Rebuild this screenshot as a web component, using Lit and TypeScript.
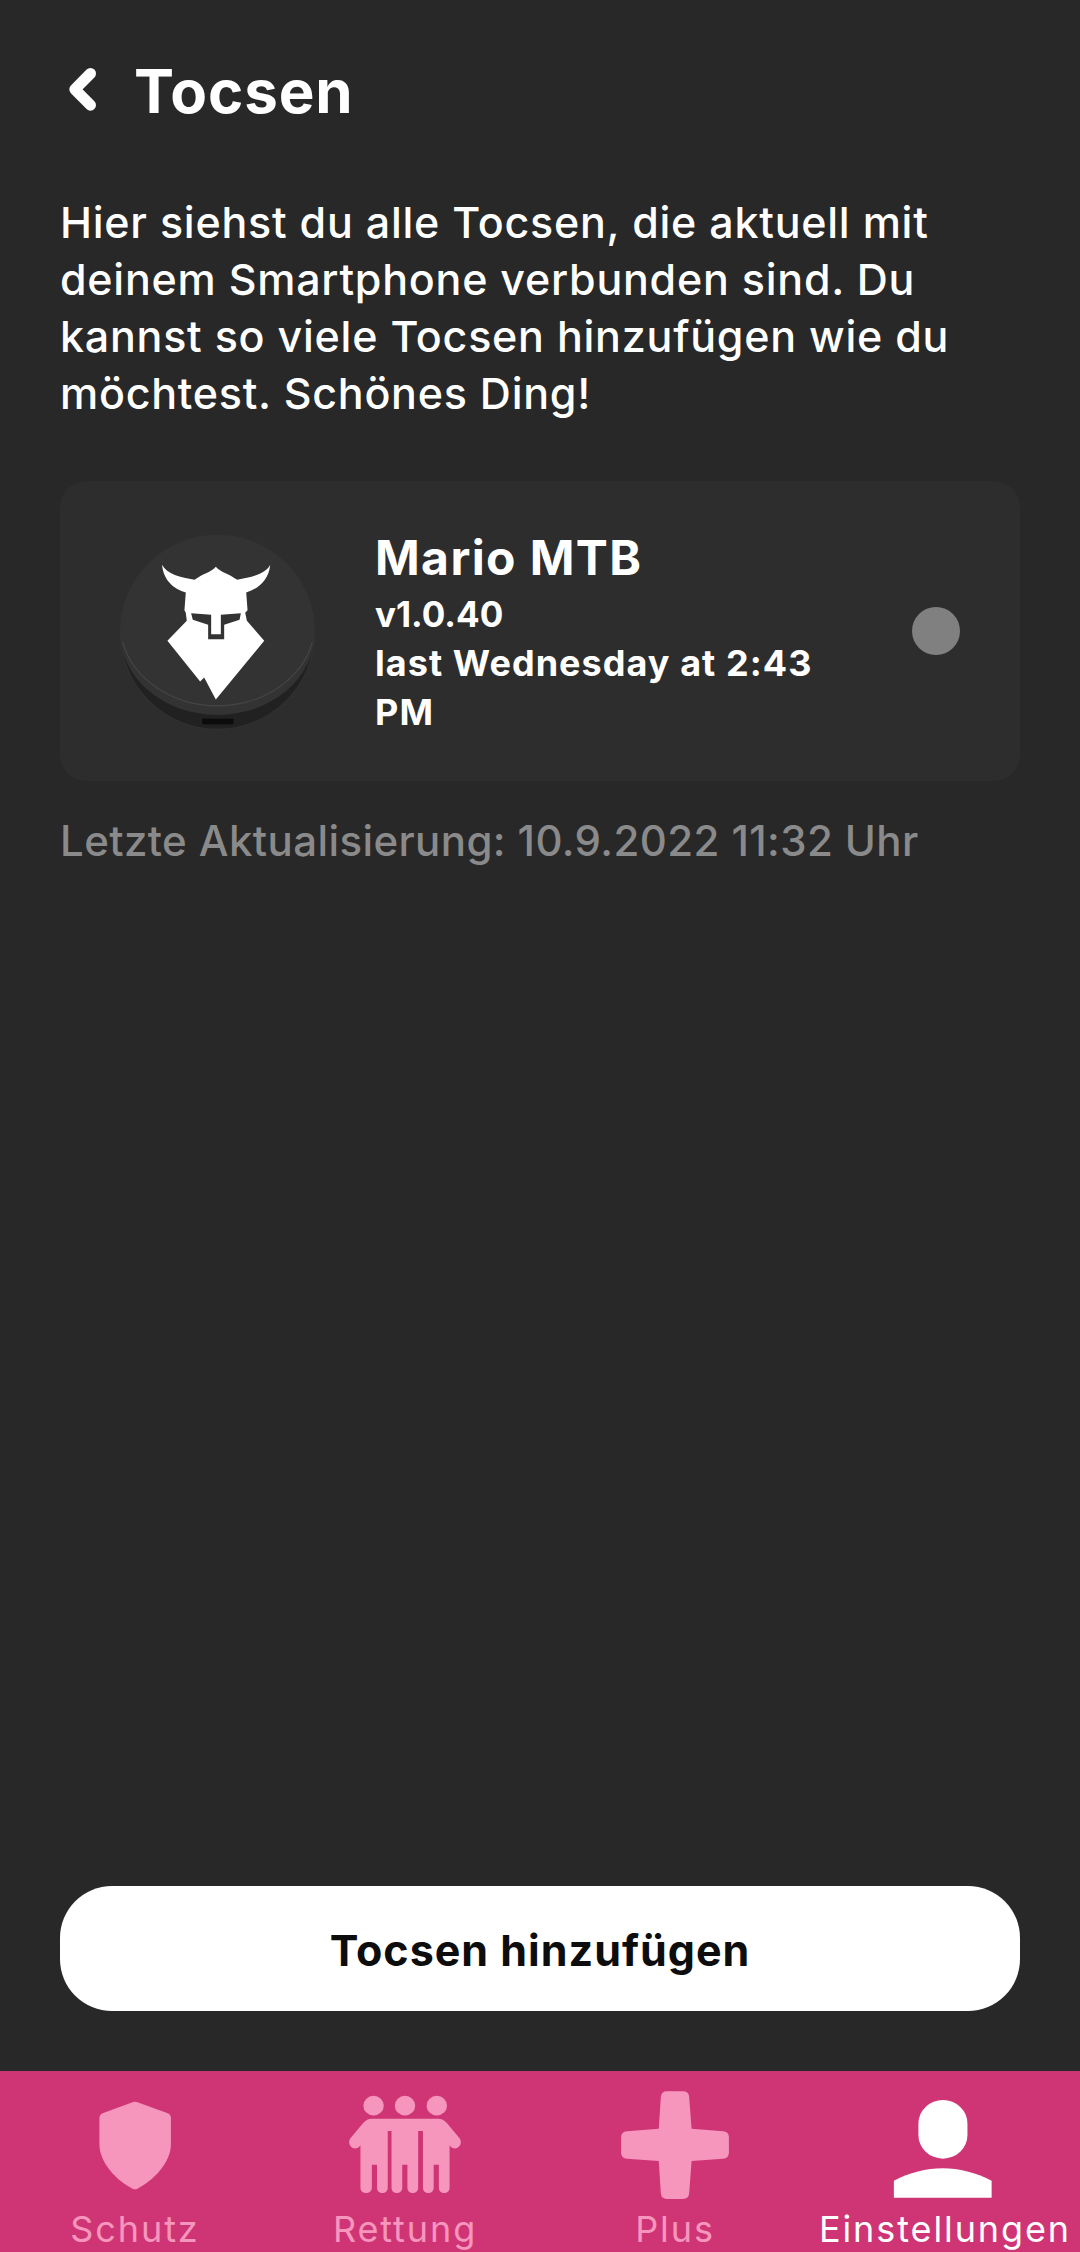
import { LitElement, html, css, svg } from 'lit';
import { customElement } from 'lit/decorators.js';

const tabs = [
  {
    label: 'Schutz',
    view: '228 120 330 330',
    icon: svg`<path d="M386 157 Q393 153 400 157 L486 189 Q497 193 497 204 L497 282 C497 340 445 392 400 416 Q393 420 386 416 C341 392 290 340 290 282 L290 204 Q290 193 301 189 Z"/>`
  },
  {
    label: 'Rettung',
    view: '1012 120 330 330',
    icon: svg`<circle cx="1086" cy="167" r="29.5"/><circle cx="1177" cy="167" r="29.5"/><circle cx="1269" cy="167" r="29.5"/>
      <path d="M1082 206 L1272 206 Q1288 206 1298 219 L1335 265 C1346 280 1330 303 1313 293 Q1306 289 1306 285 L1306 413 C1306 434 1275 434 1275 413 L1275 344 L1260 344 L1260 413 C1260 434 1229 434 1229 413 L1229 243 L1215 243 L1215 413 C1215 434 1184 434 1184 413 L1184 344 L1169 344 L1169 413 C1169 434 1138 434 1138 413 L1138 243 L1127 243 L1127 413 C1127 434 1096 434 1096 413 L1096 344 L1081 344 L1081 413 C1081 434 1048 434 1048 413 L1048 285 Q1048 289 1041 293 C1024 303 1008 280 1019 265 L1056 219 Q1066 206 1082 206 Z"/>`
  },
  {
    label: 'Plus',
    view: '228 120 330 330',
    icon: svg`<path d="M370 124 L416 124 Q433 124 434 141 L441 236 L532 244 Q549 245 549 262 L549 308 Q549 325 532 326 L441 333 L434 430 Q433 447 416 447 L370 447 Q353 447 352 430 L346 333 L254 326 Q237 325 237 308 L237 262 Q237 245 254 244 L346 236 L352 141 Q353 124 370 124 Z"/>`
  },
  {
    label: 'Einstellungen',
    active: true,
    view: '1012 120 330 330',
    icon: svg`<rect x="1100" y="150" width="142" height="176" rx="71"/><path d="M1029 392 C1120 342 1220 342 1312 392 L1312 443 L1029 443 Z"/>`
  }
];

@customElement('app-root')
export class AppRoot extends LitElement {
  static styles = css`
    :host {
      display: block;
    }

    .screen {
      display: flex;
      flex-direction: column;
      height: 2252px;
      overflow: hidden;
      background-color: #282828;
      color: #fff;
      font-family: Inter, 'Liberation Sans', sans-serif;
    }

    .header {
      display: flex;
      align-items: center;
      gap: 34px;
      padding: 61px 60px 0;
    }

    .back {
      width: 40px;
      height: 60px;
      fill: none;
      stroke: #fff;
      stroke-width: 11;
      stroke-linecap: round;
      stroke-linejoin: round;
    }

    h1 {
      margin: 0;
      font-size: 60px;
      line-height: 60px;
      font-weight: 700;
      letter-spacing: 0.9px;
    }

    .intro {
      margin: 73px 60px 0;
      font-size: 43px;
      line-height: 57px;
      font-weight: 500;
      letter-spacing: 0.75px;
    }

    .card {
      display: flex;
      align-items: center;
      height: 300px;
      margin: 59px 60px 0;
      padding: 0 60px 0 54px;
      box-sizing: border-box;
      border-radius: 26px;
      background-color: #2d2d2d;
    }

    .device {
      flex: none;
      width: 207px;
      height: 207px;
    }

    .info {
      width: 470px;
      margin-left: 54px;
      font-size: 36px;
      line-height: 49px;
      font-weight: 700;
      letter-spacing: 1.05px;
    }

    .name {
      font-size: 48px;
      line-height: 65px;
      letter-spacing: 1.4px;
    }

    .version {
      font-size: 35px;
      letter-spacing: 0;
    }

    .dot {
      width: 48px;
      height: 48px;
      margin-left: auto;
      border-radius: 50%;
      background-color: #808080;
    }

    .updated {
      margin: 35px 60px 0;
      color: #8a8a8a;
      font-size: 42px;
      line-height: 50px;
      font-weight: 500;
      letter-spacing: 0.4px;
    }

    .spacer {
      flex: 1;
    }

    .add {
      display: block;
      height: 125px;
      margin: 0 60px 60px;
      padding: 2px 0 0;
      border: 0;
      border-radius: 52px;
      background-color: #fff;
      color: #0d0d0d;
      font: 700 43px Inter, 'Liberation Sans', sans-serif;
      letter-spacing: 1px;
    }

    .tabs {
      display: grid;
      grid-template-columns: repeat(4, 1fr);
      height: 181px;
      padding-top: 19px;
      box-sizing: border-box;
      background-color: #cf3575;
    }

    .tab {
      display: flex;
      flex-direction: column;
      align-items: center;
      color: #f696bd;
      fill: #f696bd;
      font-size: 36px;
      line-height: 44px;
      letter-spacing: 1.9px;
      white-space: nowrap;
    }

    .tab.active {
      color: #fff;
      fill: #fff;
    }

    .tab svg {
      flex: none;
      width: 114px;
      height: 110px;
      margin-bottom: 7px;
    }
  `;

  render() {
    return html`
      <div class="screen">
        <div class="header">
          <svg class="back" viewBox="0 0 40 60"><path d="M30.5 12.5 L14.8 28.3 L30.5 44.2" /></svg>
          <h1>Tocsen</h1>
        </div>
        <p class="intro">
          Hier siehst du alle Tocsen, die aktuell mit deinem Smartphone verbunden sind. Du kannst so viele Tocsen
          hinzufügen wie du möchtest. Schönes Ding!
        </p>
        <div class="card">
          <svg class="device" viewBox="192 172 620 620">
            <circle cx="502" cy="484" r="292" fill="#212121" stroke="#2f2f2f" stroke-width="6" />
            <path d="M210 484 A292 292 0 0 1 794 484 A292 248 0 0 1 210 484 Z" fill="#333" />
            <path d="M218 514 A292 248 0 0 0 786 514" fill="none" stroke="#444" stroke-width="4" />
            <rect x="456" y="743" width="94" height="17" fill="#0c0c0c" />
            <path
              fill="#fff"
              d="M336 282 C350 310 392 320 433 327 C460 308 482 305 497 288 C512 305 534 308 561 327 C602 320 646 310 660 282 C655 330 622 355 588 365 L592 418 L585 426 L590 450 L642 510 L497 686 L462 620 L450 632 L352 510 L410 450 L407 426 L403 418 L407 365 C372 355 340 330 336 282 Z"
            />
            <path
              fill="#333"
              d="M423 427 L483 432 L483 490 L512 490 L512 432 L572 427 L568 447 L522 462 L522 505 L474 505 L474 462 L428 447 Z"
            />
          </svg>
          <div class="info">
            <div class="name">Mario MTB</div>
            <div class="version">v1.0.40</div>
            <div>last Wednesday at 2:43 PM</div>
          </div>
          <div class="dot"></div>
        </div>
        <div class="updated">Letzte Aktualisierung: 10.9.2022 11:32 Uhr</div>
        <div class="spacer"></div>
        <button class="add">Tocsen hinzufügen</button>
        <nav class="tabs">
          ${tabs.map(
            (t) => html`
              <div class="tab ${t.active ? 'active' : ''}">
                <svg viewBox=${t.view} preserveAspectRatio="none">${t.icon}</svg>
                <span>${t.label}</span>
              </div>
            `
          )}
        </nav>
      </div>
    `;
  }
}
